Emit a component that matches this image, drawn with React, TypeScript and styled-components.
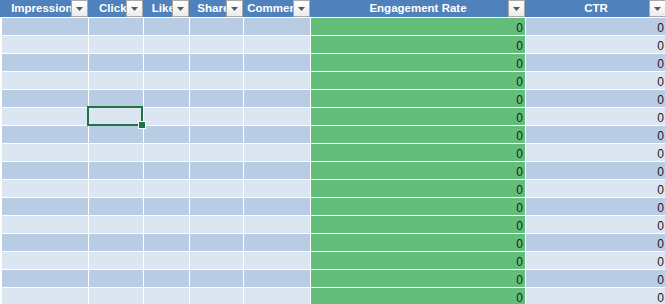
import React from "react";
import styled, { createGlobalStyle } from "styled-components";

const GlobalStyle = createGlobalStyle`
  html, body {
    margin: 0;
    padding: 0;
    background: #ffffff;
    overflow: hidden;
  }
  body {
    font-family: "Liberation Sans", Arial, sans-serif;
  }
`;

const COLS = "86px 54px 45px 53px 66px 214px 140px";

const Sheet = styled.div`
  width: 665px;
  height: 304px;
  overflow: hidden;
  background: #ffffff;
  display: flex;
  flex-direction: column;
  row-gap: 1px;
`;

const HeaderRow = styled.div`
  display: grid;
  grid-template-columns: ${COLS};
  column-gap: 1px;
  padding-left: 2px;
  height: 17px;
  background: #4f81bd;
  width: max-content;
`;

const HeaderCell = styled.div`
  position: relative;
  height: 17px;
  overflow: hidden;
  color: #ffffff;
  font-weight: bold;
  font-size: 11.5px;
  line-height: 17px;
  text-align: center;
  white-space: nowrap;
`;

const HeaderLabel = styled.span`
  display: block;
  width: 100%;
`;

const FilterButton = styled.div`
  position: absolute;
  top: 0;
  right: 0;
  width: 15px;
  height: 15px;
  border: 1px solid #a9a9a9;
  background: linear-gradient(#ffffff, #ececec);
  display: flex;
  align-items: center;
  justify-content: center;
`;

const DataRow = styled.div<{ $band: boolean }>`
  display: grid;
  grid-template-columns: ${COLS};
  column-gap: 1px;
  padding-left: 2px;
  height: 17px;
  width: max-content;
  flex-shrink: 0;
  --band: ${(p) => (p.$band ? "#b8cce4" : "#dce6f1")};
`;

const Cell = styled.div<{ $fill?: string }>`
  position: relative;
  height: 17px;
  background: ${(p) => p.$fill ?? "var(--band)"};
  display: flex;
  align-items: flex-end;
  justify-content: flex-end;
  padding-right: 2px;
  box-sizing: border-box;
  font-size: 12px;
  line-height: 14px;
  color: #1a1a1a;
`;

const Selection = styled.div`
  position: absolute;
  left: -2px;
  top: -2px;
  right: 0;
  bottom: -1px;
  border: 2px solid #217346;
  z-index: 2;
  pointer-events: none;
`;

const FillHandle = styled.div`
  position: absolute;
  right: -5px;
  bottom: -5px;
  width: 6px;
  height: 6px;
  background: #217346;
  border: 1px solid #ffffff;
`;

const headers = [
  "Impressions",
  "Clicks",
  "Likes",
  "Shares",
  "Comments",
  "Engagement Rate",
  "CTR",
];

const FilterArrow = () => (
  <svg width="7" height="4" viewBox="0 0 7 4">
    <path d="M0 0 H7 L3.5 4 Z" fill="#5a5a5a" />
  </svg>
);

export default function App() {
  const rows = Array.from({ length: 16 }, (_, i) => i);
  return (
    <>
      <GlobalStyle />
      <Sheet>
        <HeaderRow>
          {headers.map((h) => (
            <HeaderCell key={h}>
              <HeaderLabel>{h}</HeaderLabel>
              <FilterButton>
                <FilterArrow />
              </FilterButton>
            </HeaderCell>
          ))}
        </HeaderRow>
        {rows.map((r) => (
          <DataRow key={r} $band={r % 2 === 0}>
            <Cell />
            <Cell>
              {r === 5 && (
                <Selection>
                  <FillHandle />
                </Selection>
              )}
            </Cell>
            <Cell />
            <Cell />
            <Cell />
            <Cell $fill="#63be7b">0</Cell>
            <Cell>0</Cell>
          </DataRow>
        ))}
      </Sheet>
    </>
  );
}
